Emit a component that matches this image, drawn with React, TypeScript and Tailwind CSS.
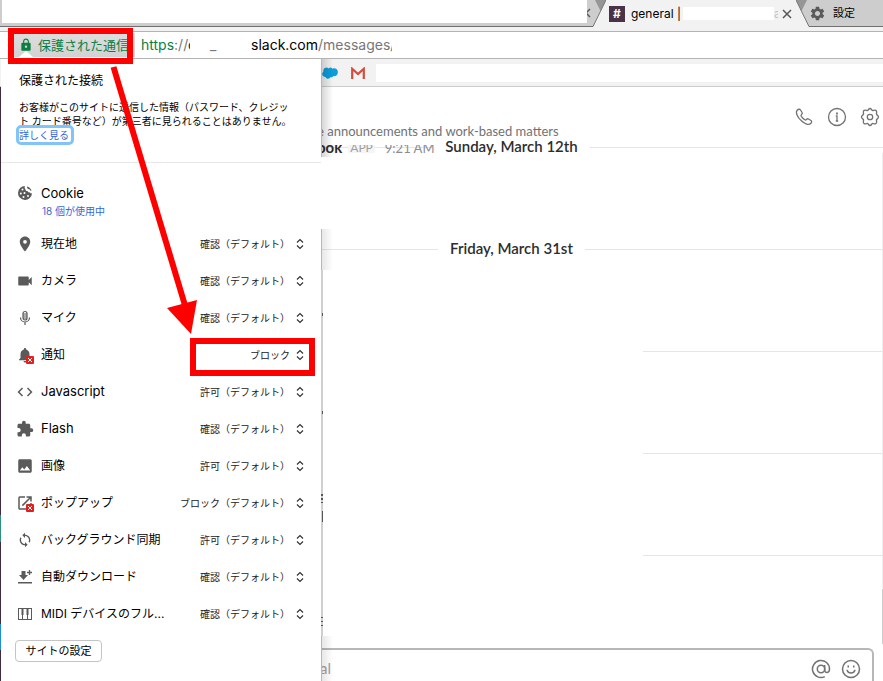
import type { ReactNode } from 'react';
import {
  MdCode,
  MdExtension,
  MdImage,
  MdLock,
  MdNotifications,
  MdOpenInNew,
  MdPlace,
  MdSettings,
  MdSync,
  MdVideocam,
} from 'react-icons/md';
import clsx from 'clsx';

const ASK = '確認（デフォルト）';
const ALLOW = '許可（デフォルト）';
const BLOCK = 'ブロック（デフォルト）';

const BlockedBadge = () => (
  <svg viewBox="0 0 8 8" className="absolute right-0 bottom-0 w-2 h-2" aria-hidden="true">
    <rect width="8" height="8" rx="1" fill="#e02020" />
    <path d="M2 2l4 4M6 2L2 6" stroke="#fff" strokeWidth="1" />
  </svg>
);

const CookieIcon = () => (
  <svg viewBox="0 0 16 16" className="w-4 h-4" aria-hidden="true">
    <path
      fill="#5a5a5a"
      d="M8 1a7 7 0 1 0 7 7.300c-.8.300-1.900 0-2.300-1-.9.300-1.900-.200-2.100-1.200-1.300.200-2.400-.800-2.200-2.100C7.500 3.300 7.400 2 8 1z"
    />
    <g fill="#fff">
      <circle cx="5.500" cy="4.500" r="1" />
      <circle cx="3.800" cy="8.500" r="1" />
      <circle cx="7.500" cy="8" r="1" />
      <circle cx="6.500" cy="12" r="1" />
      <circle cx="11" cy="11" r="1" />
    </g>
    <path fill="#5a5a5a" d="M10 1.500c2.200.6 3.800 2 4.600 4.100-1.200.4-1.900-.1-2-1.300-1.600.1-2.700-1-2.600-2.800z" />
  </svg>
);

const MicIcon = () => (
  <svg viewBox="0 0 16 16" className="w-4 h-4" fill="none" stroke="#5a5a5a" aria-hidden="true">
    <rect x="6" y="1.500" width="4" height="8.500" rx="2" strokeWidth="1.200" />
    <path d="M6 4h4M6 6h4M6 8h4" />
    <path d="M3.500 7.500a4.500 4.500 0 0 0 9 0M8 12v3" strokeWidth="1.200" />
  </svg>
);

const DownloadIcon = () => (
  <svg viewBox="0 0 16 16" className="w-4 h-4" aria-hidden="true">
    <path fill="#5a5a5a" d="M4.500 2h4v4H11l-4.500 5L2 6h2.500zM1 13h14v1.500H1z" />
    <path d="M12.500 1v5M10 3.500h5" stroke="#5a5a5a" strokeWidth="1.300" />
  </svg>
);

const PianoIcon = () => (
  <svg viewBox="0 0 16 16" className="w-4 h-4" aria-hidden="true">
    <rect x="1.500" y="2.500" width="13" height="11" fill="none" stroke="#5a5a5a" />
    <path d="M5.500 3v10M10.500 3v10" stroke="#5a5a5a" />
    <path d="M4.500 2.500h2V9h-2zM9.500 2.500h2V9h-2z" fill="#5a5a5a" />
  </svg>
);

type Permission = { label: string; value: string; icon: ReactNode; latin?: boolean };

const permissions: Permission[] = [
  { label: '現在地', value: ASK, icon: <MdPlace className="w-[18px] h-[18px]" /> },
  { label: 'カメラ', value: ASK, icon: <MdVideocam className="w-[18px] h-[18px]" /> },
  { label: 'マイク', value: ASK, icon: <MicIcon /> },
  { label: '通知', value: 'ブロック', icon: <><MdNotifications className="w-[18px] h-[18px]" /><BlockedBadge /></> },
  { label: 'Javascript', value: ALLOW, latin: true, icon: <MdCode className="w-[18px] h-[18px]" /> },
  { label: 'Flash', value: ASK, latin: true, icon: <MdExtension className="w-[18px] h-[18px]" /> },
  { label: '画像', value: ALLOW, icon: <MdImage className="w-[18px] h-[18px]" /> },
  { label: 'ポップアップ', value: BLOCK, icon: <><MdOpenInNew className="w-[18px] h-[18px]" /><BlockedBadge /></> },
  { label: 'バックグラウンド同期', value: ALLOW, icon: <MdSync className="w-4 h-4" /> },
  { label: '自動ダウンロード', value: ASK, icon: <DownloadIcon /> },
  { label: 'MIDI デバイスのフル...', value: ASK, icon: <PianoIcon /> },
];

function TabStrip() {
  return (
    <div className="flex h-[27px] bg-[#cdcdcd] text-black">
      <div className="relative flex-1 border-b border-[#6f6f6f] pl-0.5">
        <div className="h-[23px] bg-white mr-1.5" />
        <svg viewBox="0 0 6 10" className="absolute right-0 top-2 w-1.5 h-2.5" aria-hidden="true">
          <path d="M3 1L-1 5l4 4" stroke="#5a5a5a" strokeWidth="1.500" fill="none" />
        </svg>
      </div>
      <svg viewBox="0 0 13 27" className="w-[13px] h-[27px]" aria-hidden="true">
        <path d="M13 0v27H0z" fill="#f2f2f2" />
        <path d="M2 0h11L7.500 11z" fill="#969696" />
        <path d="M0 26.500L13 0" stroke="#777" fill="none" />
      </svg>
      <div className="flex items-center bg-[#f2f2f2] w-[190px] pl-[3px]">
        <span className="flex items-center justify-center w-4 h-4 bg-[#4a3248] text-white text-xs font-bold">#</span>
        <span className="ml-1.5 text-xs whitespace-nowrap">general |</span>
        <span className="ml-0.5 flex-1 h-[13px] bg-white" />
        <span className="w-1 overflow-hidden text-xs text-[#c4c4c4]">a</span>
        <button aria-label="閉じる" className="mx-1">
          <svg viewBox="0 0 10 10" className="w-2.5 h-2.5">
            <path d="M1 1l8 8M9 1L1 9" stroke="#555" strokeWidth="1.500" />
          </svg>
        </button>
      </div>
      <svg viewBox="0 0 13 27" className="w-[13px] h-[27px]" aria-hidden="true">
        <path d="M0 0l13 27H0z" fill="#f2f2f2" />
        <path d="M0 0h11L5.500 11z" fill="#969696" />
        <path d="M0 0l13 26.500" stroke="#777" fill="none" />
      </svg>
      <div className="flex items-center w-[74px] border-b border-[#6f6f6f] text-[11px]">
        <MdSettings className="w-[17px] h-[17px] text-[#5a5a5a]" />
        <span className="ml-[7px]">設定</span>
      </div>
    </div>
  );
}

function AddressBar() {
  return (
    <div className="bg-[#f2f2f2] pt-1">
      <div className="flex h-7 border-y border-[#b3b3b3] bg-white pl-3 text-sm">
        <button className="relative flex items-center w-[123px] h-6 mt-px pl-[7px] bg-linear-to-b from-[#dedede] to-[#d2d2d2] text-[13px] text-[#0b8043] whitespace-nowrap overflow-hidden">
          <MdLock className="w-3.5 h-3.5 mr-[5px] shrink-0" />
          保護された通信
          <span className="absolute left-[7px] bottom-0 border-x-[7px] border-b-[6px] border-x-transparent border-b-white" />
        </button>
        <div className="flex items-center ml-1.5 whitespace-nowrap text-[#777]">
          <span className="w-[47px]"><span className="text-[#0b8043]">https</span>://</span>
          <span className="w-0.5 overflow-hidden text-[#222]">c</span>
          <span className="w-[61px] pl-5">_</span>
          <span className="text-black">slack.com</span>
          <span>/messages</span>
          <span className="w-0.5 overflow-hidden">/</span>
        </div>
      </div>
    </div>
  );
}

function BookmarkBar() {
  return (
    <div className="flex items-center h-7 bg-[#f2f2f2] border-b border-[#ccc] pl-[322px]">
      <svg viewBox="0 0 16 12" className="w-4 h-3" aria-hidden="true">
        <path
          fill="#0d9ddb"
          d="M6.600 1.400C7.700.2 9.500.3 10.300 1.700 13.200.5 16 2.600 15.900 5.200c-.1 2.800-2.400 4.300-4.300 3.900-.7 1.100-2 1.400-3 .9-.9 2.300-4.300 2.300-5.200-.1C1.400 10.200-.1 8.300.2 6.700c.1-.8.600-1.500 1.200-1.900C.5 2 3.800-.8 6.600 1.400z"
        />
      </svg>
      <svg viewBox="0 0 16 12" className="w-4 h-3 ml-3" aria-hidden="true">
        <path d="M2 1h12v10.500H2z" fill="#f3f3f3" />
        <path d="M2.200 12V1.800L8 7l5.800-5.200V12" fill="none" stroke="#d54b3d" strokeWidth="2.200" />
      </svg>
      <div className="ml-2.5 flex-1 h-[18px] bg-white" />
    </div>
  );
}

function DateDivider({ label }: { label: string }) {
  return (
    <div className="flex items-center gap-3 h-[18px] ml-[139px] mb-[84px]">
      <span className="flex-1 h-px bg-[#e5e5e5]" />
      <h2 className="pb-0.5 text-[15px] leading-4 font-semibold text-[#2c2d30]">{label}</h2>
      <span className="flex-1 h-px bg-[#e5e5e5]" />
    </div>
  );
}

function SlackPane() {
  return (
    <main className="relative flex-1 flex flex-col bg-white font-['Lato',sans-serif] text-[#717274]">
      <header className="flex items-start h-[51px] pl-[316px]">
        <p className="mt-9 text-[13px] leading-4 whitespace-nowrap">e announcements and work-based matters</p>
        <div className="ml-auto mt-5 mr-[3px] flex gap-[13px]">
          <button aria-label="Call">
            <svg viewBox="0 0 20 20" className="w-5 h-5" fill="none" stroke="#717274" strokeWidth="1.300">
              <path d="M3.200 3.200C4.400 2 5.800 1.900 6.500 3l1.600 2.500c.5.800.1 1.500-.6 2-.6.500-.6 1.100-.2 1.800a12 12 0 0 0 3.500 3.500c.7.400 1.300.3 1.700-.3.500-.8 1.200-1 2-.5l2.400 1.500c1.100.7 1 2-.2 3.100-1.900 1.800-5.900.6-9.300-2.800C3.200 10.200 1.300 5.400 3.200 3.200z" />
            </svg>
          </button>
          <button aria-label="Details">
            <svg viewBox="0 0 20 20" className="w-5 h-5" fill="none" stroke="#717274" strokeWidth="1.300">
              <circle cx="10" cy="10" r="8.500" />
              <path d="M8.800 8.800H10V14M8.800 14h2.400" />
              <path d="M10 5.500v2" strokeWidth="1.800" />
            </svg>
          </button>
          <button aria-label="Settings">
            <svg viewBox="0 0 20 20" className="w-5 h-5" fill="none" stroke="#717274" strokeWidth="1.300">
              <path d="M8.500 2.500Q10 .5 11.500 2.500 12 4 13.500 3.300 16.500 2.500 16.700 5 15.900 7.500 17.500 8.300 19.500 10 17.500 11.700 15.900 12.500 16.700 15 16.500 17.500 13.500 16.700 12 16 11.500 17.500 10 19.500 8.500 17.500 8 16 6.500 16.700 3.500 17.500 3.300 15 4.100 12.500 2.500 11.700.5 10 2.500 8.300 4.100 7.500 3.300 5 3.500 2.500 6.500 3.300 8 4 8.500 2.500z" />
              <circle cx="10" cy="10" r="2.700" />
            </svg>
          </button>
        </div>
      </header>

      <DateDivider label="Sunday, March 12th" />
      <DateDivider label="Friday, March 31st" />
      {[0, 1, 2].map((i) => (
        <div key={i} className="flex items-center h-[18px] ml-[642px] mb-[84px]">
          <span className="flex-1 h-px bg-[#e5e5e5]" />
        </div>
      ))}

      {/* bottom half of the last message header */}
      <div className="absolute left-[316px] top-[58px] h-2 flex items-end overflow-hidden whitespace-nowrap">
        <b className="text-[15px] leading-3 text-[#2c2d30]">ook</b>
        <span className="ml-1.5 px-0.5 bg-[#f5f5f5] text-xs leading-[10px] text-[#a0a0a2]">APP</span>
        <span className="ml-2.5 text-[13px] leading-[10px] text-[#8b8c8e]">9:21 AM</span>
      </div>

      {/* message composer */}
      <div className="absolute left-0 right-[9px] bottom-0 flex items-center h-[33px] border-2 border-b-0 border-[#b7b7b8] rounded-t-md pt-1.5 pr-[11px]">
        <input
          aria-label="Message"
          placeholder="al"
          className="flex-1 min-w-0 pl-[317px] text-[15px] outline-none placeholder:text-[#a0a0a2]"
        />
        <button aria-label="Mention" className="mr-2.5">
          <svg viewBox="0 0 20 20" className="w-5 h-5" fill="none" stroke="#717274" strokeWidth="1.500">
            <circle cx="10" cy="10" r="3.700" />
            <path d="M13.700 6v5c0 3.500 4.800 3.500 4.800-1A8.500 8.500 0 1 0 13.800 17.600" />
          </svg>
        </button>
        <button aria-label="Emoji">
          <svg viewBox="0 0 20 20" className="w-5 h-5" fill="none" stroke="#717274" strokeWidth="1.500">
            <circle cx="10" cy="10" r="8.500" />
            <path d="M5.500 11.500h1.300M13.200 11.500h1.300M6.300 11.500c.8 3.300 6.600 3.300 7.400 0" />
            <path d="M6.500 7.500h1.500M12 7.500h1.500" strokeWidth="2" />
          </svg>
        </button>
      </div>

      {/* scroll track */}
      <div className="absolute right-0 top-[66px] bottom-[93px] w-px bg-[#eee]" />
      <div className="absolute right-0 bottom-[37px] h-[55px] w-px bg-[#ccc]" />
    </main>
  );
}

function PermissionRow({ label, value, icon, latin }: Permission) {
  return (
    <li className="flex items-center h-[37px] pl-[15px] pr-3.5">
      <span className="relative flex items-center justify-center w-[18px] h-[18px] text-[#5a5a5a]">{icon}</span>
      <label htmlFor={label} className={clsx('ml-[7px] flex-1 whitespace-nowrap', latin ? 'text-[13px]' : 'text-xs')}>
        {label}
      </label>
      <span className="relative flex items-center">
        <select id={label} defaultValue={value} className="appearance-none field-sizing-content h-4 pr-[17px] text-[10px] leading-4 text-[#222]">
          <option>{value}</option>
        </select>
        <svg viewBox="0 0 8 12" className="absolute right-[3px] w-2 h-3 pointer-events-none" fill="none" stroke="#333" strokeWidth="1.200" aria-hidden="true">
          <path d="M1 4.500l3-3 3 3M1 7.500l3 3 3-3" />
        </svg>
      </span>
    </li>
  );
}

function SiteInfoPopup() {
  return (
    <section className="absolute left-px top-[59px] bottom-0 w-80 bg-white text-black">
      <div className="pt-3.5 pl-[18px] pb-5 border-b border-[#e8e8e8]">
        <h1 className="text-xs leading-4">保護された接続</h1>
        <p className="mt-[11px] text-[10px] leading-[14px] whitespace-nowrap">
          お客様がこのサイトに送信した情報（パスワード、クレジッ
          <br />
          ト カード番号など）が第三者に見られることはありません。
        </p>
        <a href="#details" className="block w-[52px] h-[14px] rounded-xs text-[10px] leading-[14px] text-[#3367d6] whitespace-nowrap outline-3 outline-[#82c4f8]">
          詳しく見る
        </a>
      </div>

      <div className="flex pt-[21px] pl-4 pb-[7px]">
        <span className="mt-px"><CookieIcon /></span>
        <div className="ml-2">
          <p className="text-[13px] leading-[18px]">Cookie</p>
          <a href="#cookies" className="block mt-0.5 ml-px text-[10px] leading-[14px] text-[#3367d6]">18 個が使用中</a>
        </div>
      </div>

      <ul>
        {permissions.map((p) => (
          <PermissionRow key={p.label} {...p} />
        ))}
      </ul>

      <button className="ml-3.5 mt-2 h-[22px] w-[87px] border border-[#c4c4c4] rounded text-[11px] leading-none">サイトの設定</button>

      {/* drop shadow, visible only where the page behind it is not blanked out */}
      <div className="absolute left-full top-0 h-[98px] w-3 border-l border-[#b8b8b8] bg-linear-to-r from-[#00000028] to-transparent" />
      <div className="absolute left-full top-[170px] h-[41px] w-3 border-l border-[#b8b8b8] bg-linear-to-r from-[#00000018] to-transparent" />
      <div className="absolute left-full top-[211px] bottom-[45px] w-0.5 bg-[#cfcfcf]" />
      <div className="absolute left-full bottom-0 h-[45px] w-3 border-l border-[#b8b8b8] bg-linear-to-r from-[#00000018] to-transparent" />
      <svg viewBox="0 0 3 320" className="absolute left-full top-[250px] w-[3px] h-80" aria-hidden="true">
        <path d="M1 4h1v3H1zM1 102h1v3H1zM0 185h2v2H0zM0 189h2v2H0zM0 193h2v1H0zM1 202h1v11H1zM0 308h2v1H0zM0 312h2v1H0zM0 316h2v1H0z" fill="#555" />
      </svg>
    </section>
  );
}

export default function App() {
  return (
    <div className="relative flex flex-col min-h-screen overflow-hidden font-['Inter','Noto_Sans_CJK_JP',sans-serif]">
      <TabStrip />
      <AddressBar />
      <BookmarkBar />
      <div className="flex flex-1 flex-col border-l border-[#3f2a40]">
        <SlackPane />
      </div>
      {/* workspace sidebar highlights peeking out on the left */}
      <div className="absolute left-0 top-[515px] h-[27px] w-px bg-[#2c8f84]" />
      <div className="absolute left-0 top-[624px] h-[26px] w-px bg-[#1b8fd6]" />

      <SiteInfoPopup />

      {/* callouts */}
      <div className="absolute left-2 top-7 w-[125px] h-9 border-6 border-[#ff0000] pointer-events-none" />
      <div className="absolute left-[190px] top-[338px] w-[125px] h-[38px] border-6 border-[#ff0000] pointer-events-none" />
      <svg viewBox="0 0 100 280" className="absolute left-[105px] top-[60px] w-[100px] h-[280px] pointer-events-none" aria-hidden="true">
        <path d="M8.500 7l72 240" stroke="#ff0000" strokeWidth="6" />
        <path d="M62 248l30-8-6 34z" fill="#ff0000" />
      </svg>
    </div>
  );
}
